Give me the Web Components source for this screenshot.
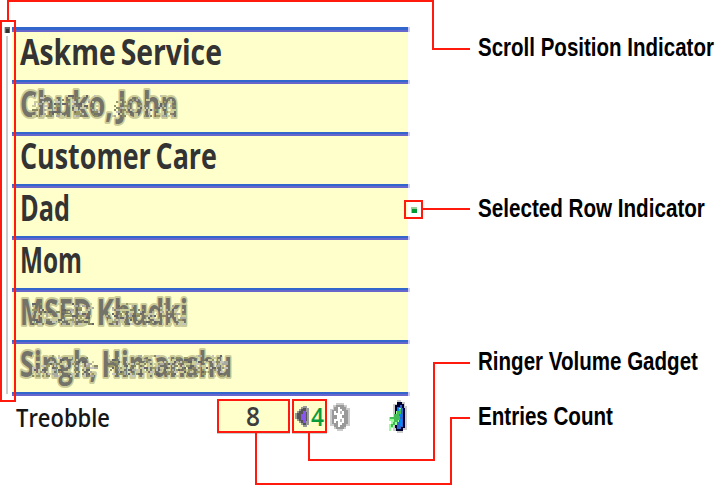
<!DOCTYPE html>
<html lang="en"><head><meta charset="utf-8"><title>Contact list</title>
<style>html,body{margin:0;background:#fff;overflow:hidden}body{width:715px;height:486px}</style></head>
<body><annotated-screen></annotated-screen>
<script>
// Text set to an exact width and baseline inside its own box.
class FitText extends HTMLElement {
  connectedCallback() {
    const a = n => this.getAttribute(n), w = +a('w'), s = +a('size');
    const soft = this.hasAttribute('smudged');
    const root = this.attachShadow({mode:'open'});
    root.innerHTML = `<style>:host{display:block}svg{display:block;overflow:visible}
      text{font-family:${a('font') || '"Liberation Sans Narrow","Liberation Sans"'},sans-serif;font-size:${s}px;font-weight:${a('weight') || 700};fill:${a('color') || '#000'};word-spacing:${a('space') || 0}px}
      .soft{stroke:#cccc99;stroke-width:4px;stroke-linejoin:round;paint-order:stroke;fill:#73736a}</style>
      <svg width="${w}" height="${s}"><text class="${soft ? 'soft' : ''}" x="0" y="${s * .75}"></text><g shape-rendering="crispEdges"></g></svg>`;
    const t = root.querySelector('text');
    t.textContent = a('text');
    t.setAttribute('transform', `scale(${w / t.getComputedTextLength()} 1)`);
    if (soft) {
      let seed = w, out = '';
      const rnd = () => (seed = (seed * 16807) % 2147483647) / 2147483647;
      const gap = +a('gap');
      const colors = ['#999966','#cccc99','#c4c4bc','#8a8a62','#cccc99','#aaaaa0','#666666'];
      for (let x = 12; x < w - 5; x += 2) {
        if (x > gap && x < gap + 14) continue;
        for (let y = 5; y < 27; y += 2) if (rnd() < (y < 10 ? .15 : .36))
          out += `<rect x="${x}" y="${y}" width="${rnd() < .4 ? 4 : 2}" height="2" fill="${colors[rnd() * 7 | 0]}"/>`;
      }
      root.querySelector('g').innerHTML = out;
    }
  }
}
customElements.define('fit-text', FitText);

customElements.define('contact-row', class extends HTMLElement {
  connectedCallback() {
    this.attachShadow({mode:'open'}).innerHTML = `<style>
      :host{display:block;box-sizing:border-box;height:52px;background:linear-gradient(#ffc,#ffc) 0 0/396px 100% no-repeat;padding:10px 0 0 8px;position:relative}
      :host::before{content:"";position:absolute;left:0;right:0;top:0;height:4px;background:linear-gradient(#36c 50%,#66c 50%);border-right:2px solid #ccf;box-sizing:border-box}
      :host([first]){height:53px;padding-top:11px}:host([first])::before{height:5px;background:linear-gradient(#36c 60%,#66c 60%)}
    </style><slot></slot>`;
  }
});

customElements.define('scroll-track', class extends HTMLElement {
  connectedCallback() {
    this.attachShadow({mode:'open'}).innerHTML = `<style>:host{display:block;width:12px}svg{display:block}</style>
    <svg width="12" height="375" shape-rendering="crispEdges"><path fill="#ccc" d="M6 9h2v358H6zM4 0h6v6H4z"/><path fill="#666" d="M5 0h5v6H5z"/><path fill="#333" d="M6 2h3v4H6z"/></svg>`;
  }
});

customElements.define('status-bar', class extends HTMLElement {
  connectedCallback() {
    this.attachShadow({mode:'open'}).innerHTML = `<style>
    :host{display:flex;height:39px;align-items:flex-start;padding:3px 0 0 16px;box-sizing:border-box}
    .name{width:201px;padding-top:8px}.box{box-sizing:border-box;height:34px;border:2px solid #ff1a0d;background:#ffc;display:flex;box-shadow:0 1px #ccc}
    .count{width:73px;margin-right:2px;padding:5px 0 0 27px}.vol{width:35px;padding:5px 0 0 1px}
    .vol fit-text{margin-left:2px}.bt{margin:4px 0 0 3px}.bat{margin:1px 0 0 39px}svg{display:block;flex:none}</style>
    <fit-text class="name" text="Treobble" w="94" size="26" weight="600" font="'Open Sans'" color="#161616"></fit-text>
    <div class="box count"><fit-text text="8" w="14" size="27" weight="600" font="'Open Sans'" color="#3d3d3d"></fit-text></div>
    <div class="box vol"><svg width="14" height="21" shape-rendering="crispEdges"><path fill="#999" d="M0 7h2V5h2V3h2V1h2V0h4v2h2v17h-2v2H8v-2H6v-2H4v-2H2v-2H0z"/><path fill="#555" d="M2 7h2V5h2V3h2V2h3v4h1v9h-1v4H8v-2H6v-2H4v-2H2z"/><path fill="#85e" d="M6 8h2V5h3v12H8v-3H6z"/></svg>
      <fit-text text="4" w="13" size="26" weight="600" font="'Open Sans'" color="#099c3d"></fit-text></div>
    <svg class="bt" width="20" height="28" shape-rendering="crispEdges"><path fill="#ccc" d="M6 0h8v2h3v3h3v18h-4v3h-3v2H7v-2H4v-3H0V6h3V2h3z"/><path fill="#999" d="M6 2h8v2h2v3h2v14h-2v3h-2v2H6v-2H4v-3H2V7h2V4h2z"/><path fill="#fff" d="M8 4h2v2h2v2h2v4h-2v3h2v5h-2v2h-2v2H8v-6H6v2H4v-4h3v-4H4V8h2v2h2z"/><path fill="#bbb" d="M10 8h2v3h-2zM10 16h2v3h-2z"/></svg>
    <svg class="bat" width="18" height="33" shape-rendering="crispEdges"><path fill="#ccc" d="M8 0h4v2h4v4h2v24h-4v3H8v-2H4V4h4z"/><path fill="#00002f" d="M8 2h5v2h2v4h1v20h-2v3H7v-3H6V5h2z"/><path fill="#36c" d="M8 7h3V5h2v3h1v19h-2v2H8z"/><path fill="#08f" d="M9 8h3v9H9zM11 19h2v7h-2z"/><path fill="#9f9" d="M10 8h2v6h-2v8H8v3H5v3H2v3H0v-7h2v-3H0v-4h4v-3h3v-3h3z"/><path fill="#4b5" d="M10 9h2v5h-2v2h1v4H9v2H6v3H4v2H2v-3h2v-2h1v-3H1v-2h4v-3h3v-3h2z"/></svg>`;
  }
});

// Red connectors and outlines that lie over the screen.
customElements.define('callout-lines', class extends HTMLElement {
  connectedCallback() {
    this.attachShadow({mode:'open'}).innerHTML = `<style>:host{position:absolute;inset:0;pointer-events:none}svg{display:block}</style>
    <svg width="715" height="486" shape-rendering="crispEdges" fill="none"><g stroke="#ff1a0d" stroke-width="2">
    <path d="M8 21V1H433V49H470M1 21H15V401H1zM405 201H422V218H405zM423 209H470M309 433V460H434V363H470M256 433V484H451V418H470"/></g>
    <path fill="#9c9" d="M411 207h6v6h-6z"/><path fill="#093" d="M412 209h5v4h-5z"/></svg>`;
  }
});

customElements.define('annotated-screen', class extends HTMLElement {
  connectedCallback() {
    const row = (t, w, x = '', first = '') => `<contact-row ${first}><fit-text text="${t}" w="${w}" size="36" weight="700" space="-3" font="'Open Sans'" color="#333" ${x}></fit-text></contact-row>`;
    const label = (t, w) => `<fit-text text="${t}" w="${w}" size="25"></fit-text>`;
    this.attachShadow({mode:'open'}).innerHTML = `<style>
    :host{display:grid;grid-template-columns:410px 1fr;width:715px;height:486px;position:relative;background:#fff}
    .device{padding-top:27px}.main{display:flex;height:369px}.list{width:398px}
    .end{height:4px;background:linear-gradient(#36c 50%,#66c 50%);border-right:2px solid #ccf;box-sizing:border-box}
    .labels{padding:37px 0 0 68px}.labels fit-text:nth-child(2){margin-top:136px}.labels fit-text:nth-child(3){margin-top:128px}.labels fit-text:nth-child(4){margin-top:30px}
    </style>
    <div class="device"><div class="main"><scroll-track></scroll-track><div class="list">
    ${row('Askme Service',202,'','first')}${row('Chuko, John',158,'smudged gap="78"')}${row('Customer Care',197)}${row('Dad',50)}${row('Mom',62)}${row('MSED Khudki',168,'smudged gap="72"')}${row('Singh, Himanshu',212,'smudged gap="74"')}<div class="end"></div></div></div><status-bar></status-bar></div>
    <div class="labels">${label('Scroll Position Indicator',236)}${label('Selected Row Indicator',227)}${label('Ringer Volume Gadget',220)}${label('Entries Count',135)}</div>
    <callout-lines></callout-lines>`;
  }
});
</script></body></html>
